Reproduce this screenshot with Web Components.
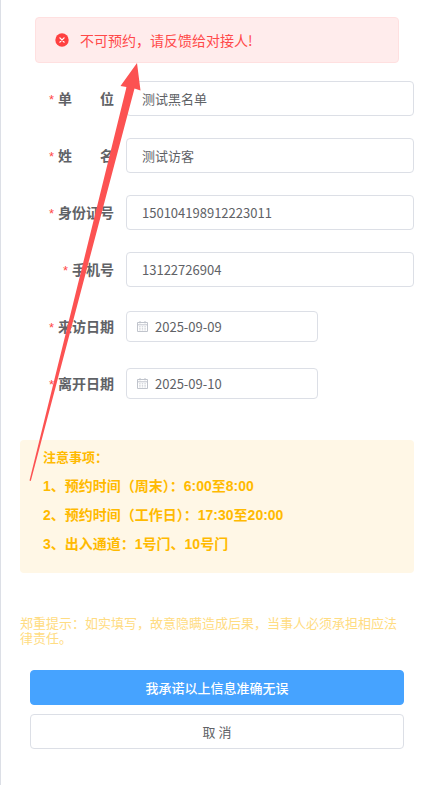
<!DOCTYPE html>
<html lang="zh-CN">
<head>
  <meta charset="UTF-8">
  <meta name="viewport" content="width=device-width, initial-scale=1.0">
  <title>访客预约</title>
  <style>
    body {
      margin: 0;
      background: #fff;
      color: #606266;
      font-family: "Noto Sans CJK SC", sans-serif;
      font-size: 13px;
    }
  </style>
</head>
<body>
  <visitor-page>
    <error-alert>不可预约，请反馈给对接人!</error-alert>
    <visitor-form>
      <form-field label="单　　位" value="测试黑名单"></form-field>
      <form-field label="姓　　名" value="测试访客"></form-field>
      <form-field label="身份证号" value="150104198912223011"></form-field>
      <form-field label="手机号" value="13122726904"></form-field>
      <form-field label="来访日期" value="2025-09-09" type="date"></form-field>
      <form-field label="离开日期" value="2025-09-10" type="date"></form-field>
    </visitor-form>
    <notice-box>
      <span slot="title">注意事项：</span>
      <li>1、预约时间（周末）：6:00至8:00</li>
      <li>2、预约时间（工作日）：17:30至20:00</li>
      <li>3、出入通道：1号门、10号门</li>
    </notice-box>
    <warning-tip>郑重提示：如实填写，故意隐瞒造成后果，当事人必须承担相应法律责任。</warning-tip>
    <action-bar>
      <action-button variant="primary">我承诺以上信息准确无误</action-button>
      <action-button>取 消</action-button>
    </action-bar>
    <pointer-arrow slot="overlay"></pointer-arrow>
  </visitor-page>

  <script>
    class VisitorPage extends HTMLElement {
      connectedCallback() {
        this.attachShadow({ mode: "open" })
        this.shadowRoot.innerHTML = `
          <style>
            :host {
              display: block;
              position: relative;
              box-sizing: border-box;
              min-height: 100vh;
              padding: 17px 18px 36px 19px;
              border-left: 1px solid #dcdfe6;
            }
          </style>
          <main><slot></slot></main>
          <slot name="overlay"></slot>
        `
      }
    }

    class ErrorAlert extends HTMLElement {
      connectedCallback() {
        this.attachShadow({ mode: "open" })
        this.shadowRoot.innerHTML = `
          <style>
            :host {
              display: flex;
              align-items: center;
              gap: 11px;
              margin: 0 15px;
              padding: 12px 19px;
              border: 1px solid #ffe0e0;
              border-radius: 4px;
              background: #ffecec;
              color: #ff4949;
              font-size: 14px;
              line-height: 20px;
            }

            svg {
              flex: none;
              width: 14px;
              height: 14px;
            }
          </style>
          <svg viewBox="0 0 14 14" aria-hidden="true">
            <circle cx="7" cy="7" r="6.7" fill="#ff4040"></circle>
            <path d="M4.9 4.9l4.2 4.2M9.1 4.9l-4.2 4.2" stroke="#fff" stroke-width="1.3" stroke-linecap="round"></path>
          </svg>
          <span role="alert"><slot></slot></span>
        `
      }
    }

    class VisitorForm extends HTMLElement {
      connectedCallback() {
        this.attachShadow({ mode: "open" })
        this.shadowRoot.innerHTML = `
          <style>
            :host {
              display: flex;
              flex-direction: column;
              gap: 22px;
              margin-top: 18px;
            }
          </style>
          <slot></slot>
        `
      }
    }

    class FormField extends HTMLElement {
      connectedCallback() {
        const isDate = this.getAttribute("type") === "date"

        this.attachShadow({ mode: "open" })
        this.shadowRoot.innerHTML = `
          <style>
            :host {
              display: grid;
              grid-template-columns: 94px 1fr;
              gap: 12px;
              align-items: center;
              min-height: 35px;
            }

            label {
              font-size: 14px;
              font-weight: 700;
              line-height: 20px;
              text-align: right;
              white-space: nowrap;
            }

            label::before {
              content: "*";
              margin-right: 4px;
              color: #ff4949;
              font-family: "Liberation Sans", sans-serif;
              font-size: 13px;
              font-weight: 400;
            }

            .control {
              display: flex;
              align-items: center;
              gap: 7px;
              box-sizing: border-box;
              height: 35px;
              padding: 0 15px;
              border: 1px solid #dcdfe6;
              border-radius: 4px;
              background: #fff;
            }

            .control.date {
              width: 192px;
              height: 31px;
              padding: 0 10px;
            }

            .control:focus-within {
              border-color: #46a3ff;
            }

            input {
              flex: 1;
              min-width: 0;
              padding: 0;
              border: 0;
              outline: none;
              background: none;
              color: inherit;
              font: inherit;
              line-height: 20px;
            }

            svg {
              flex: none;
              width: 11px;
              height: 11px;
              fill: none;
              stroke: #c0c4cc;
            }
          </style>
          <label for="field"></label>
          <div class="control ${isDate ? "date" : ""}">
            ${isDate ? this.calendarIcon() : ""}
            <input id="field" type="text" required>
          </div>
        `

        this.shadowRoot.querySelector("label").textContent = this.getAttribute("label")
        this.shadowRoot.querySelector("input").value = this.getAttribute("value")
      }

      calendarIcon() {
        return `
          <svg viewBox="0 0 11 11" aria-hidden="true">
            <path d="M.5 1.5h10v9H.5zM.5 3.8h10M3 0v2.4M8 0v2.4"></path>
            <path d="M2.2 5.7h6.6M2.2 7.3h6.6M2.2 8.9h6.6" stroke-width=".8" stroke-dasharray="1.4 1.2"></path>
          </svg>
        `
      }
    }

    class NoticeBox extends HTMLElement {
      connectedCallback() {
        this.attachShadow({ mode: "open" })
        this.shadowRoot.innerHTML = `
          <style>
            :host {
              display: block;
              margin-top: 39px;
              padding: 3px 23px 14px;
              border-radius: 4px;
              background: #fff7e6;
              color: #ffba00;
              font-family: "Liberation Sans", "Noto Sans CJK SC", sans-serif;
              font-weight: 700;
              line-height: 29px;
            }

            ul {
              margin: 0;
              padding: 0;
              font-size: 14px;
              list-style: none;
            }
          </style>
          <slot name="title"></slot>
          <ul><slot></slot></ul>
        `
      }
    }

    class WarningTip extends HTMLElement {
      connectedCallback() {
        this.attachShadow({ mode: "open" })
        this.shadowRoot.innerHTML = `
          <style>
            :host {
              display: block;
              margin-top: 42px;
              padding-right: 8px;
              color: #ffdc82;
              line-height: 15px;
            }
          </style>
          <slot></slot>
        `
      }
    }

    class ActionBar extends HTMLElement {
      connectedCallback() {
        this.attachShadow({ mode: "open" })
        this.shadowRoot.innerHTML = `
          <style>
            :host {
              display: flex;
              flex-direction: column;
              gap: 9px;
              margin: 25px 10px 0;
            }
          </style>
          <slot></slot>
        `
      }
    }

    class ActionButton extends HTMLElement {
      connectedCallback() {
        this.attachShadow({ mode: "open" })
        this.shadowRoot.innerHTML = `
          <style>
            :host {
              display: block;
            }

            button {
              display: block;
              width: 100%;
              height: 35px;
              padding: 0;
              border: 1px solid #dcdfe6;
              border-radius: 4px;
              background: #fff;
              color: inherit;
              font: inherit;
              cursor: pointer;
            }

            :host([variant="primary"]) button {
              border-color: #46a3ff;
              background: #46a3ff;
              color: #fff;
              font-weight: 500;
            }
          </style>
          <button type="button"><slot></slot></button>
        `
      }
    }

    // Red arrow drawn over the form, pointing at the alert
    class PointerArrow extends HTMLElement {
      connectedCallback() {
        this.attachShadow({ mode: "open" })
        this.shadowRoot.innerHTML = `
          <style>
            :host {
              display: block;
              position: absolute;
              top: 62px;
              left: 28px;
              pointer-events: none;
            }

            svg {
              display: block;
            }
          </style>
          <svg width="114" height="420" viewBox="0 0 114 420" aria-hidden="true">
            <path d="M108 1L111.500 28.500L105.500 26.500L1.800 419L.5 418.500L97.500 25L91.500 24Z" fill="#fc5252"></path>
          </svg>
        `
      }
    }

    customElements.define("visitor-page", VisitorPage)
    customElements.define("error-alert", ErrorAlert)
    customElements.define("visitor-form", VisitorForm)
    customElements.define("form-field", FormField)
    customElements.define("notice-box", NoticeBox)
    customElements.define("warning-tip", WarningTip)
    customElements.define("action-bar", ActionBar)
    customElements.define("action-button", ActionButton)
    customElements.define("pointer-arrow", PointerArrow)
  </script>
</body>
</html>
